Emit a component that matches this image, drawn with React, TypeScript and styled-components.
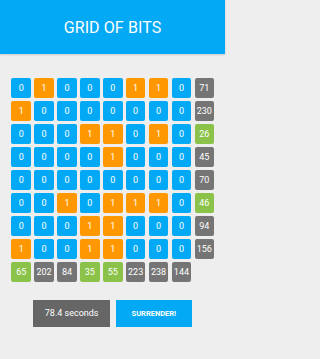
import React from "react";
import styled, { createGlobalStyle } from "styled-components";

const GlobalStyle = createGlobalStyle`
  html, body {
    margin: 0;
    padding: 0;
    background: #eeeeee;
    font-family: Roboto, "Liberation Sans", sans-serif;
  }
`;

const Page = styled.div`
  width: 225px;
  min-height: 359px;
  display: flex;
  flex-direction: column;
  align-items: center;
`;

const Header = styled.header`
  width: 100%;
  height: 54px;
  background: #03a9f4;
  display: flex;
  align-items: center;
  justify-content: center;
  box-shadow: 0 1px 2px rgba(0, 0, 0, 0.15);
`;

const Title = styled.h1`
  margin: 0;
  color: #ffffff;
  font-size: 16px;
  font-weight: 400;
  letter-spacing: 0.1px;
`;

const Grid = styled.div`
  margin-top: 24px;
  margin-left: 0.5px;
  display: grid;
  grid-template-columns: repeat(9, 19.5px);
  grid-auto-rows: 19.5px;
  column-gap: 3.4px;
  row-gap: 3.5px;
`;

type Kind = "zero" | "one" | "ok" | "bad";

const colors: Record<Kind, string> = {
  zero: "#03a9f4",
  one: "#ff9800",
  ok: "#8bc34a",
  bad: "#757575",
};

const Cell = styled.div<{ $kind: Kind }>`
  background: ${(p) => colors[p.$kind]};
  border-radius: 2px;
  color: #ffffff;
  font-size: 9px;
  display: flex;
  align-items: center;
  justify-content: center;
`;

const Actions = styled.div`
  margin-top: 18.5px;
  margin-left: 0.5px;
  display: flex;
  gap: 5.7px;
`;

const TimeBox = styled.div`
  width: 76.5px;
  height: 26.5px;
  background: #666666;
  color: #ffffff;
  font-size: 9px;
  display: flex;
  align-items: center;
  justify-content: center;
`;

const SurrenderButton = styled.button`
  width: 76.5px;
  height: 26.5px;
  border: none;
  padding: 0;
  background: #03a9f4;
  color: #ffffff;
  font-family: Roboto, "Liberation Sans", sans-serif;
  font-size: 7.5px;
  font-weight: 700;
  cursor: pointer;
`;

const bits = [
  [0, 1, 0, 0, 0, 1, 1, 0],
  [1, 0, 0, 0, 0, 0, 0, 0],
  [0, 0, 0, 1, 1, 0, 1, 0],
  [0, 0, 0, 0, 1, 0, 0, 0],
  [0, 0, 0, 0, 0, 0, 0, 0],
  [0, 0, 1, 0, 1, 1, 1, 0],
  [0, 0, 0, 1, 1, 0, 0, 0],
  [1, 0, 0, 1, 1, 0, 0, 0],
];

const rowTargets = [71, 230, 26, 45, 70, 46, 94, 156];
const colTargets = [65, 202, 84, 35, 55, 223, 238, 144];

const toNumber = (list: number[]) => list.reduce((acc, b) => acc * 2 + b, 0);

const App: React.FC = () => {
  return (
    <Page>
      <GlobalStyle />
      <Header>
        <Title>GRID OF BITS</Title>
      </Header>
      <Grid>
        {bits.map((row, r) => (
          <React.Fragment key={r}>
            {row.map((b, c) => (
              <Cell key={c} $kind={b ? "one" : "zero"}>
                {b}
              </Cell>
            ))}
            <Cell $kind={toNumber(row) === rowTargets[r] ? "ok" : "bad"}>
              {rowTargets[r]}
            </Cell>
          </React.Fragment>
        ))}
        {colTargets.map((t, c) => (
          <Cell
            key={`col-${c}`}
            $kind={toNumber(bits.map((row) => row[c])) === t ? "ok" : "bad"}
          >
            {t}
          </Cell>
        ))}
      </Grid>
      <Actions>
        <TimeBox>78.4 seconds</TimeBox>
        <SurrenderButton>SURRENDER!</SurrenderButton>
      </Actions>
    </Page>
  );
};

export default App;
